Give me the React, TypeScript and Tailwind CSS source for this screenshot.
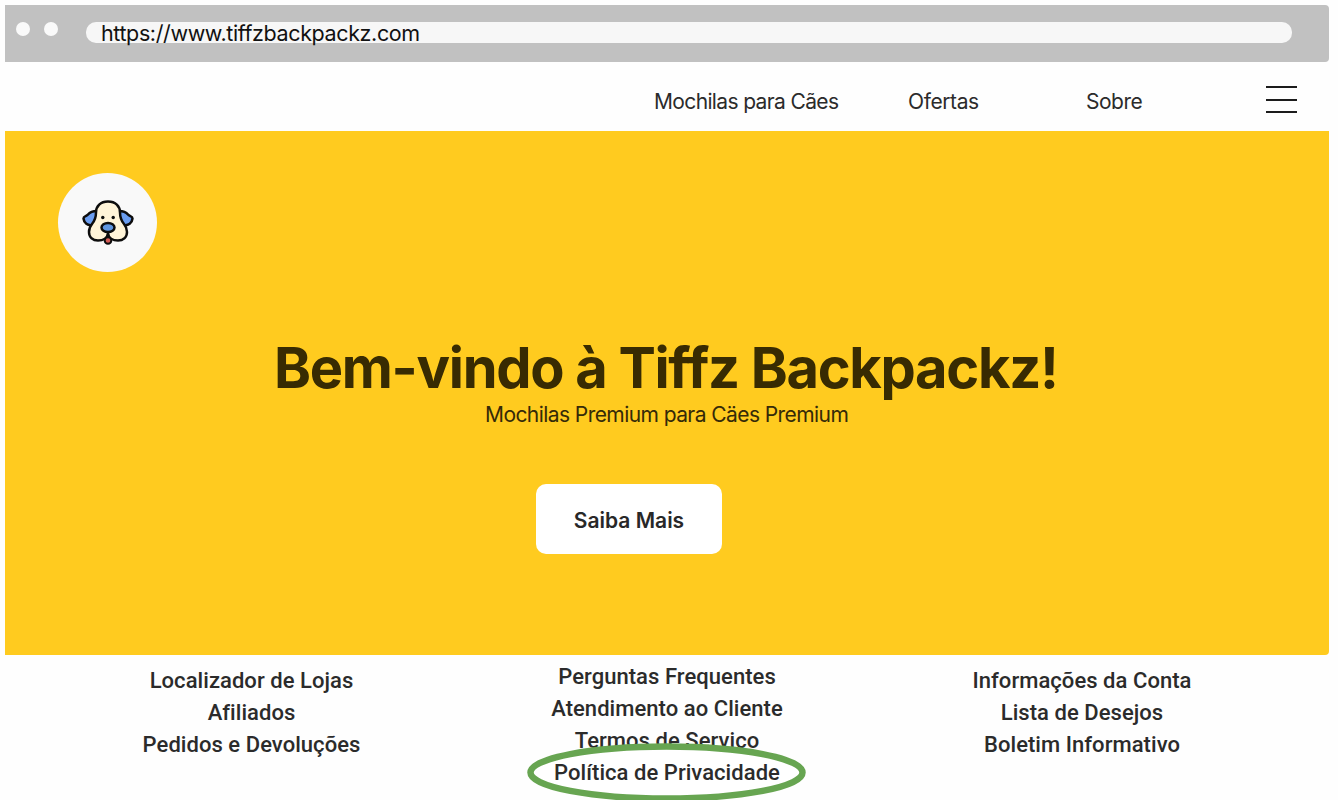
import React from "react";

function BrowserBar() {
  return (
    <header className="flex h-[57px] items-start rounded-r-[4px] bg-[#c1c1c1] pl-[11px] pr-[37px] pt-[17px]">
      <span className="h-[14px] w-[14px] rounded-full bg-[#fafafa]" />
      <span className="ml-[14px] h-[14px] w-[14px] rounded-full bg-[#fafafa]" />
      <div className="ml-[28px] flex h-[21px] flex-1 items-center rounded-[10px] bg-[#f7f7f7] pl-[15px]">
        <span className="whitespace-nowrap text-[21.5px] leading-[22px] tracking-[-0.38px] text-[#111111]">
          https://www.tiffzbackpackz.com
        </span>
      </div>
    </header>
  );
}

function NavBar() {
  return (
    <nav className="flex h-[69px] items-center justify-end pr-[32px] pt-[10px] text-[21px] leading-[26px] text-[#2b2b2b]">
      <a className="w-[184px] whitespace-nowrap tracking-[-0.64px]">Mochilas para Cães</a>
      <a className="ml-[70px] w-[71px] whitespace-nowrap tracking-[-0.4px]">Ofertas</a>
      <a className="ml-[107px] w-[56px] whitespace-nowrap tracking-[-0.5px]">Sobre</a>
      <button aria-label="Menu" className="-mt-[4px] ml-[124px] flex h-[27px] w-[31px] flex-col justify-between">
        <span className="h-[2px] w-full bg-[#1c1c1c]" />
        <span className="h-[2px] w-full bg-[#1c1c1c]" />
        <span className="h-[2px] w-full bg-[#1c1c1c]" />
      </button>
    </nav>
  );
}

function DogLogo() {
  return (
    <div className="flex h-[99px] w-[99px] items-center justify-center rounded-full bg-[#f9f9f9]">
      <svg width="54" height="48" viewBox="0 0 54 48" fill="none" stroke="#0d0d0d" strokeWidth="2.5" strokeLinejoin="round" strokeLinecap="round">
        <path d="M16 12 C12 12 9 13 7 15.500 C5.500 17.500 2.500 17 2.500 19.500 C3 24 6.500 27 11.500 26 C14 23 15.500 19 16 12 Z" fill="#6a9df0" />
        <path d="M38 12 C42 12 45 13 47 15.500 C48.500 17.500 51.500 17 51.500 19.500 C51 24 47.500 27 42.500 26 C40 23 38.500 19 38 12 Z" fill="#6a9df0" />
        <path d="M27 2.500 C19.500 2.500 15 7 15 13.500 C15 19 13.500 22 11 25 C8.500 28 8 30 8 33 C8 38.500 12 41.500 17 41.500 C22 41.500 26.500 39 27 34 C27.500 39 32 41.500 37 41.500 C42 41.500 46 38.500 46 33 C46 30 45.500 28 43 25 C40.500 22 39 19 39 13.500 C39 7 34.500 2.500 27 2.500 Z" fill="#fff4d8" />
        <circle cx="27" cy="41.500" r="3.300" fill="#d65b55" strokeWidth="2" />
        <ellipse cx="27" cy="28.500" rx="6.500" ry="4.500" fill="#6096df" />
        <circle cx="21.800" cy="18.500" r="1.700" fill="#0d0d0d" stroke="none" />
        <circle cx="32.200" cy="18.500" r="1.700" fill="#0d0d0d" stroke="none" />
      </svg>
    </div>
  );
}

function Hero() {
  return (
    <main className="flex h-[524px] flex-col items-start rounded-br-[4px] bg-[#ffcb1f] pl-[53px] pt-[42px]">
      <DogLogo />
      <h1 className="ml-[216px] mt-[62px] whitespace-nowrap text-[56px] font-bold leading-[68px] tracking-[-1.3px] text-[#382b02]">
        Bem-vindo à Tiffz Backpackz!
      </h1>
      <p className="ml-[427px] whitespace-nowrap text-[21px] leading-[26px] tracking-[-0.57px] text-[#352a08]">
        Mochilas Premium para Cäes Premium
      </p>
      <button className="ml-[478px] mt-[56px] flex h-[70px] w-[186px] items-center justify-center rounded-[10px] bg-white pt-[3px] text-[21px] font-semibold text-[#282828]">
        Saiba Mais
      </button>
    </main>
  );
}

const linkText = "whitespace-nowrap text-[22px] font-medium leading-[32px] tracking-[0.05px] text-[#2b2b2b] [font-family:Roboto,sans-serif]";

function Footer() {
  return (
    <footer className="flex items-start pt-[6px]">
      <ul className={`ml-[136px] mt-[4px] w-[221px] text-center ${linkText}`}>
        <li>Localizador de Lojas</li>
        <li>Afiliados</li>
        <li>Pedidos e Devoluções</li>
      </ul>
      <ul className={`ml-[165px] w-[280px] text-center ${linkText}`}>
        <li>Perguntas Frequentes</li>
        <li>Atendimento ao Cliente</li>
        <li>Termos de Serviço</li>
        <li className="relative">
          <svg className="absolute -top-[15px] left-0" width="280" height="60" viewBox="0 0 280 60">
            <ellipse cx="139.500" cy="30.500" rx="136" ry="26" fill="white" stroke="#67a551" strokeWidth="6.500" />
          </svg>
          <span className="relative">Política de Privacidade</span>
        </li>
      </ul>
      <ul className={`ml-[165px] mt-[4px] w-[220px] text-center ${linkText}`}>
        <li>Informações da Conta</li>
        <li>Lista de Desejos</li>
        <li>Boletim Informativo</li>
      </ul>
    </footer>
  );
}

export default function App() {
  return (
    <div className="h-[800px] w-full overflow-hidden bg-[#fefefe] pl-[5px] pr-[9px] pt-[5px] [font-family:Inter,sans-serif]">
      <BrowserBar />
      <NavBar />
      <Hero />
      <Footer />
    </div>
  );
}
